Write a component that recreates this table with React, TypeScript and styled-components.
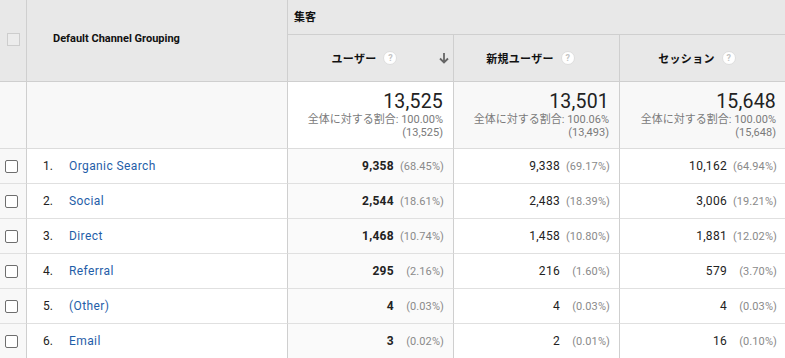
import React from "react";
import styled, { createGlobalStyle, css } from "styled-components";

const Global = createGlobalStyle`
  html, body { margin: 0; padding: 0; background: #fff; overflow: hidden; }
  body { font-family: Roboto, "Noto Sans CJK JP", "Liberation Sans", sans-serif; color: #222; }
`;

const Table = styled.div`
  display: grid;
  grid-template-columns: 27px 261px 166px 166px 166px;
  grid-template-rows: 35px 47px 67px repeat(6, 35px);
  width: 786px;
`;

const Cell = styled.div<{ $bg?: string; $rowLine?: string; $noRight?: boolean }>`
  box-sizing: border-box;
  background: ${(p) => p.$bg || "#fff"};
  border-bottom: 1px solid ${(p) => p.$rowLine || "#e0e0e0"};
  border-right: ${(p) => (p.$noRight ? "none" : "1px solid #cfcfcf")};
  min-width: 0;
`;

const HeadCheckCell = styled(Cell)`
  grid-row: span 2;
  display: flex;
  justify-content: center;
  align-items: center;
  padding-bottom: 3px;
`;

const HeadBox = styled.div`
  width: 11px;
  height: 11px;
  border: 1px solid #cdcdcd;
  background: #ececec;
`;

const DimHead = styled(Cell)`
  grid-row: span 2;
  display: flex;
  align-items: center;
  padding-left: 26px;
  padding-bottom: 4px;
  font-size: 11px;
  font-weight: 700;
  color: #111;
`;

const GroupHead = styled(Cell)`
  grid-column: span 3;
  display: flex;
  align-items: center;
  padding-left: 6px;
  padding-bottom: 2px;
  font-size: 11px;
  font-weight: 700;
  color: #111;
`;

const MetricHead = styled(Cell)`
  display: grid;
  grid-template-columns: 1fr auto 1fr;
  align-items: center;
  padding-right: 12px;
  font-size: 11px;
  font-weight: 700;
  color: #111;
`;

const HeadLabel = styled.div`
  grid-column: 2;
  display: flex;
  align-items: center;
  gap: 7px;
  white-space: nowrap;
  letter-spacing: 0.3px;
`;

const Help = styled.span`
  width: 14px;
  height: 14px;
  border-radius: 50%;
  background: #fff;
  border: 1px solid #dedede;
  box-sizing: border-box;
  color: #c4c4c4;
  font-size: 9px;
  font-weight: 700;
  display: inline-flex;
  align-items: center;
  justify-content: center;
  font-family: Roboto, sans-serif;
  letter-spacing: 0;
`;

const SortArrow = styled.div`
  grid-column: 3;
  justify-self: end;
  margin-right: -9px;
  display: flex;
`;

const TotalCell = styled(Cell)`
  display: flex;
  flex-direction: column;
  align-items: flex-end;
  padding: 9px 10px 0 0;
`;

const TotalNum = styled.div`
  font-size: 19.5px;
  line-height: 22px;
  letter-spacing: 0.2px;
  color: #222;
`;

const TotalSub = styled.div`
  font-size: 11px;
  line-height: 13px;
  color: #7a7a7a;
  white-space: nowrap;
`;

const CheckCell = styled(Cell)`
  display: flex;
  justify-content: center;
  align-items: center;
  padding-right: 3px;
`;

const Box = styled.div`
  width: 13px;
  height: 13px;
  box-sizing: border-box;
  border: 1px solid #6e6e6e;
  border-radius: 2px;
  background: #fff;
`;

const DimCell = styled(Cell)`
  display: flex;
  align-items: center;
  padding-left: 16px;
  font-size: 12px;
`;

const Rank = styled.span`
  width: 26px;
  color: #222;
`;

const ChannelLink = styled.a`
  color: #1f5ea8;
  text-decoration: none;
  letter-spacing: 0.4px;
`;

const ValueCell = styled(Cell)`
  display: flex;
  align-items: center;
  padding-right: 9px;
`;

const Value = styled.span<{ $bold?: boolean }>`
  flex: 1;
  text-align: right;
  font-size: 12px;
  letter-spacing: 0.3px;
  color: #222;
  ${(p) =>
    p.$bold &&
    css`
      font-weight: 700;
    `}
`;

const Pct = styled.span`
  width: 50px;
  text-align: right;
  font-size: 11px;
  letter-spacing: 0.1px;
  color: #8a8a8a;
`;

type Metric = { v: string; p: string };
const rows: { name: string; m: Metric[] }[] = [
  { name: "Organic Search", m: [{ v: "9,358", p: "(68.45%)" }, { v: "9,338", p: "(69.17%)" }, { v: "10,162", p: "(64.94%)" }] },
  { name: "Social", m: [{ v: "2,544", p: "(18.61%)" }, { v: "2,483", p: "(18.39%)" }, { v: "3,006", p: "(19.21%)" }] },
  { name: "Direct", m: [{ v: "1,468", p: "(10.74%)" }, { v: "1,458", p: "(10.80%)" }, { v: "1,881", p: "(12.02%)" }] },
  { name: "Referral", m: [{ v: "295", p: "(2.16%)" }, { v: "216", p: "(1.60%)" }, { v: "579", p: "(3.70%)" }] },
  { name: "(Other)", m: [{ v: "4", p: "(0.03%)" }, { v: "4", p: "(0.03%)" }, { v: "4", p: "(0.03%)" }] },
  { name: "Email", m: [{ v: "3", p: "(0.02%)" }, { v: "2", p: "(0.01%)" }, { v: "16", p: "(0.10%)" }] },
];

const totals = [
  { n: "13,525", pct: "100.00%", abs: "(13,525)" },
  { n: "13,501", pct: "100.06%", abs: "(13,493)" },
  { n: "15,648", pct: "100.00%", abs: "(15,648)" },
];

const metricNames = ["ユーザー", "新規ユーザー", "セッション"];

const HEAD_BG = "#e8e8e8";
const HEAD_LINE = "#cfcfcf";

export default function App() {
  return (
    <>
      <Global />
      <Table>
        <HeadCheckCell $bg={HEAD_BG} $rowLine={HEAD_LINE}>
          <HeadBox />
        </HeadCheckCell>
        <DimHead $bg={HEAD_BG} $rowLine={HEAD_LINE}>Default Channel Grouping</DimHead>
        <GroupHead $bg={HEAD_BG} $rowLine={HEAD_LINE} $noRight>集客</GroupHead>
        {metricNames.map((n, i) => (
          <MetricHead key={n} $bg={HEAD_BG} $rowLine={HEAD_LINE} $noRight={i === 2}>
            <HeadLabel>
              {n}
              <Help>?</Help>
            </HeadLabel>
            {i === 0 && (
              <SortArrow>
                <svg width="12" height="12" viewBox="0 0 12 12">
                  <path d="M6 1v9M2 6.5l4 4 4-4" stroke="#666" strokeWidth="1.8" fill="none" />
                </svg>
              </SortArrow>
            )}
          </MetricHead>
        ))}

        <Cell $bg="#f8f8f8" $rowLine="#dcdcdc" />
        <Cell $bg="#f8f8f8" $rowLine="#dcdcdc" />
        {totals.map((t, i) => (
          <TotalCell key={t.n} $bg={i === 0 ? "#fff" : "#f8f8f8"} $rowLine="#dcdcdc" $noRight={i === 2}>
            <TotalNum>{t.n}</TotalNum>
            <TotalSub>全体に対する割合: {t.pct}</TotalSub>
            <TotalSub>{t.abs}</TotalSub>
          </TotalCell>
        ))}

        {rows.map((r, ri) => (
          <React.Fragment key={r.name}>
            <CheckCell $bg="#f8f8f8">
              <Box />
            </CheckCell>
            <DimCell>
              <Rank>{ri + 1}.</Rank>
              <ChannelLink>{r.name}</ChannelLink>
            </DimCell>
            {r.m.map((m, mi) => (
              <ValueCell key={mi} $bg={mi === 0 ? "#fafafa" : "#fff"} $noRight={mi === 2}>
                <Value $bold={mi === 0}>{m.v}</Value>
                <Pct>{m.p}</Pct>
              </ValueCell>
            ))}
          </React.Fragment>
        ))}
      </Table>
    </>
  );
}
